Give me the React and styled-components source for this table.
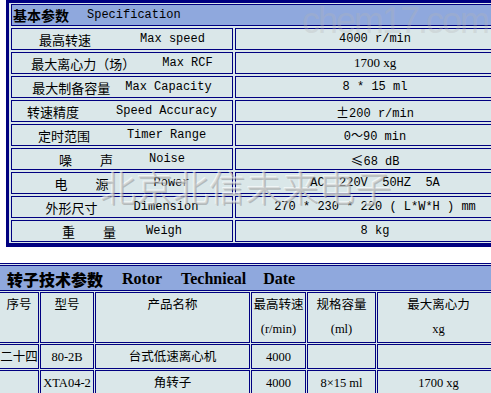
import React from "react";
import styled, { createGlobalStyle } from "styled-components";

const NAVY = "#000080";
const HEAD = "#8fa8dd";
const CELL = "#dae7e9";
const CJK = `"Noto Sans CJK SC", sans-serif`;

const specs = [
  { cn: ["最高转速"], en: "Max speed", gap: 49, value: "4000 r/min" },
  { cn: ["最大离心力（场）"], en: "Max RCF", gap: 27, value: "1700 xg", serif: true },
  { cn: ["最大制备容量"], en: "Max Capacity", gap: 15, value: "8 * 15 ml" },
  { cn: ["转速精度"], en: "Speed Accuracy", gap: 37, wide: "±", value: "200 r/min" },
  { cn: ["定时范围"], en: "Timer Range", gap: 37, value: "0～90 min" },
  { cn: ["噪", "声"], en: "Noise", gap: 36, wide: "≤", value: "68 dB" },
  { cn: ["电", "源"], en: "Power", gap: 45, value: "AC  220V  50HZ  5A" },
  { cn: ["外形尺寸"], en: "Dimension", gap: 36, value: "270 * 230 * 220 ( L*W*H ) mm" },
  { cn: ["重", "量"], en: "Weigh", gap: 30, value: "8 kg" },
];

const rotors = [
  ["二十四", "80-2B", "台式低速离心机", "4000", "", ""],
  ["", "XTA04-2", "角转子", "4000", "8×15 ml", "1700 xg"],
];

const Global = createGlobalStyle`
  body { margin: 0; background: #fff; }
`;

const Page = styled.div`
  position: relative;
  width: 491px;
  height: 393px;
  overflow: hidden;
  background: #fff;
`;

const SpecTable = styled.div`
  width: 504px;
  margin-left: 6px;
  padding: 1px 2px;
  border: 3px solid ${NAVY};
  border-bottom-width: 4px;
  background: ${CELL};
  display: flex;
  flex-direction: column;
  gap: 2px;
`;

const SpecHead = styled.div`
  height: 22px;
  box-sizing: border-box;
  border: 1px solid ${NAVY};
  background: ${HEAD};
  display: flex;
  align-items: center;
  gap: 18px;
  padding-left: 1px;
  & b {
    font-family: ${CJK};
    font-size: 14px;
  }
  & span {
    font-family: "Liberation Mono", monospace;
    font-size: 12px;
  }
`;

const SpecRow = styled.div`
  display: grid;
  grid-template-columns: 222px 280px;
  gap: 2px;
`;

const SpecCell = styled.div`
  height: 22px;
  box-sizing: border-box;
  border: 1px solid ${NAVY};
  background: ${CELL};
  display: flex;
  align-items: center;
  justify-content: center;
  gap: ${(p) => p.$gap || 0}px;
  white-space: pre;
  font-family: ${(p) => (p.$serif ? `"Liberation Serif", serif` : `"Liberation Mono", ${CJK}`)};
  font-size: ${(p) => (p.$serif ? 13 : 12)}px;
  color: #000;
`;

const Cn = styled.span`
  display: flex;
  gap: 28px;
  font-family: ${CJK};
  font-size: 13px;
`;

const Wide = styled.span`
  font-family: ${CJK};
  font-size: 13px;
`;

const RotorTable = styled.div`
  width: 510px;
  margin-top: 16px;
  margin-left: -3px;
  padding: 1px;
  border-top: 1px solid ${NAVY};
  border-left: 1px solid ${NAVY};
  background: ${CELL};
  display: grid;
  grid-template-columns: 40px 54px 155px 55px 69px 123px;
  grid-template-rows: 26px 51px 25px 25px;
  gap: 1px;
`;

const RotorHead = styled.div`
  grid-column: 1 / -1;
  border: 1px solid ${NAVY};
  background: ${HEAD};
  display: flex;
  align-items: center;
  gap: 19px;
  padding: 2px 0 0 7px;
  font-family: "Liberation Serif", serif;
  font-size: 16px;
  font-weight: bold;
  white-space: nowrap;
  & b {
    font-family: ${CJK};
  }
`;

const Cell = styled.div`
  border: 1px solid ${NAVY};
  background: ${CELL};
  display: flex;
  flex-direction: column;
  align-items: center;
  justify-content: ${(p) => (p.$top ? "flex-start" : "center")};
  font-family: "Liberation Serif", ${CJK};
  font-size: 12.5px;
  line-height: 24px;
  white-space: nowrap;
`;

const Stamp = styled.div`
  position: absolute;
  left: 100px;
  top: 166px;
  font-family: ${CJK};
  font-size: 36px;
  font-weight: 300;
  line-height: 40px;
  letter-spacing: 0.5px;
  color: rgba(200, 200, 200, 0.55);
  text-shadow: 1px 1px 0 rgba(130, 130, 130, 0.45), -1px -1px 0 rgba(255, 255, 255, 0.6);
  white-space: nowrap;
  pointer-events: none;
`;

const Mark = styled.div`
  position: absolute;
  left: 302px;
  top: 3px;
  font-family: "Liberation Sans", sans-serif;
  font-size: 36px;
  line-height: 36px;
  letter-spacing: -2px;
  color: rgba(180, 180, 180, 0.3);
  pointer-events: none;
`;

export default function App() {
  return (
    <Page>
      <Global />
      <SpecTable>
        <SpecHead>
          <b>基本参数</b>
          <span>Specification</span>
        </SpecHead>
        {specs.map((s) => (
          <SpecRow key={s.en}>
            <SpecCell $gap={s.gap}>
              <Cn>
                {s.cn.map((c) => (
                  <span key={c}>{c}</span>
                ))}
              </Cn>
              <span>{s.en}</span>
            </SpecCell>
            <SpecCell $serif={s.serif}>
              <span>
                {s.wide && <Wide>{s.wide}</Wide>}
                {s.value}
              </span>
            </SpecCell>
          </SpecRow>
        ))}
      </SpecTable>

      <RotorTable>
        <RotorHead>
          <b>转子技术参数</b>
          <span>Rotor</span>
          <span>Technieal</span>
          <span style={{ marginLeft: -2 }}>Date</span>
        </RotorHead>
        <Cell $top>序号</Cell>
        <Cell $top>型号</Cell>
        <Cell $top>产品名称</Cell>
        <Cell $top>
          <span>最高转速</span>
          <span>(r/min)</span>
        </Cell>
        <Cell $top>
          <span>规格容量</span>
          <span>(ml)</span>
        </Cell>
        <Cell $top>
          <span>最大离心力</span>
          <span>xg</span>
        </Cell>
        {rotors.map((r, i) =>
          r.map((v, j) => <Cell key={`${i}-${j}`}>{v}</Cell>)
        )}
      </RotorTable>

      <Mark>chem17.com</Mark>
      <Stamp>北京北信未来电子</Stamp>
    </Page>
  );
}
